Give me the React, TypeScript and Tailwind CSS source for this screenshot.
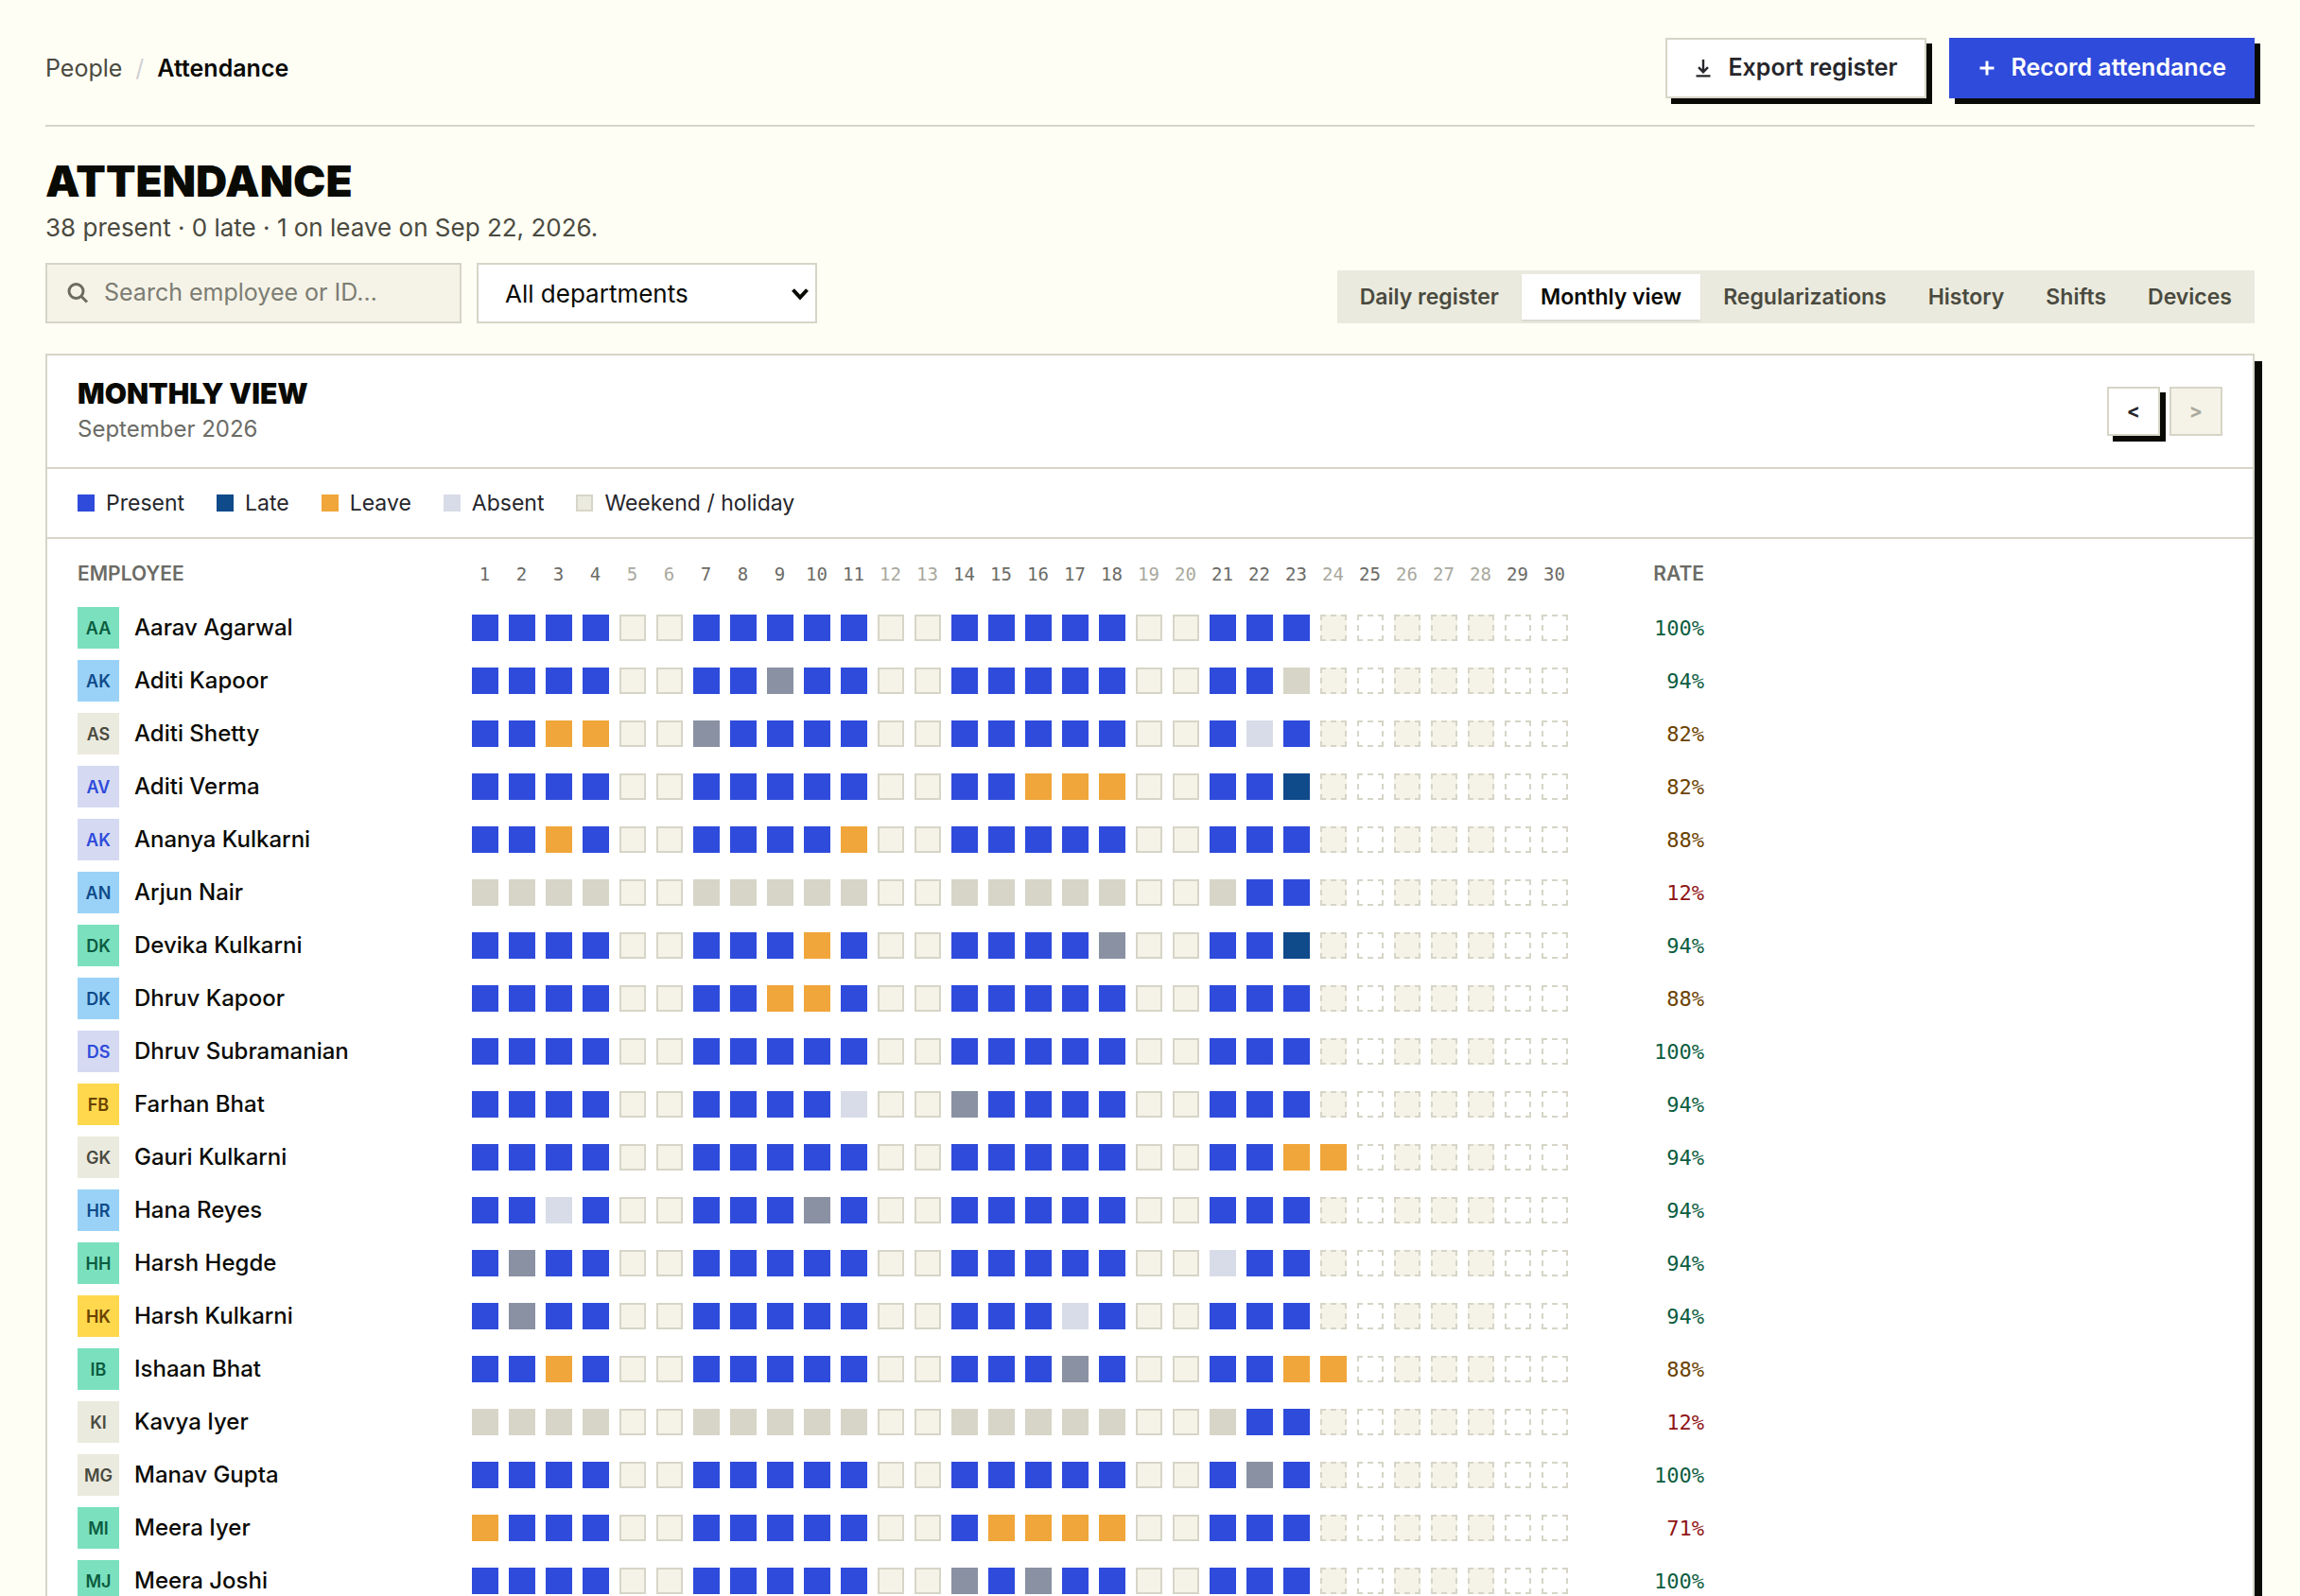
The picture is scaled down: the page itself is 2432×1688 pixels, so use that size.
import React from "react";
import clsx from "clsx";

type Status = "present" | "late" | "leave" | "absent" | "half" | "none";
type Tone = "green" | "blue" | "sand" | "lavender" | "yellow";

interface Employee {
  name: string;
  tone: Tone;
  rate: number;
  joined?: number;
  days?: Record<number, Status>;
}

const TODAY = 23;
const DAYS = Array.from({ length: 30 }, (_, i) => i + 1);
const OFF_DAYS = [5, 6, 12, 13, 19, 20, 24, 26, 27, 28];

const TABS = ["Daily register", "Monthly view", "Regularizations", "History", "Shifts", "Devices"];

const LEGEND = [
  { label: "Present", swatch: "bg-[#2f4bdb]" },
  { label: "Late", swatch: "bg-[#0f4a8a]" },
  { label: "Leave", swatch: "bg-[#f0a63a]" },
  { label: "Absent", swatch: "bg-[#d8dce8]" },
  { label: "Weekend / holiday", swatch: "bg-[#ebeade] border-2 border-[#d6d5c7]" },
];

const STATUS_STYLES: Record<Status, string> = {
  present: "bg-[#2f4bdb]",
  late: "bg-[#0f4a8a]",
  leave: "bg-[#f0a63a]",
  absent: "bg-[#d8dce8]",
  half: "bg-[#8a91a3]",
  none: "bg-[#d6d5c7]",
};

const TONE_STYLES: Record<Tone, string> = {
  green: "bg-[#7be0be] text-[#0b5c40]",
  blue: "bg-[#9ad2f7] text-[#0f4a8a]",
  sand: "bg-[#ebeade] text-[#4a4a40]",
  lavender: "bg-[#d5daf2] text-[#2f4bdb]",
  yellow: "bg-[#ffd84d] text-[#6b4200]",
};

const EMPLOYEES: Employee[] = [
  { name: "Aarav Agarwal", tone: "green", rate: 100 },
  { name: "Aditi Kapoor", tone: "blue", rate: 94, days: { 9: "half", 23: "none" } },
  { name: "Aditi Shetty", tone: "sand", rate: 82, days: { 3: "leave", 4: "leave", 7: "half", 22: "absent" } },
  { name: "Aditi Verma", tone: "lavender", rate: 82, days: { 16: "leave", 17: "leave", 18: "leave", 23: "late" } },
  { name: "Ananya Kulkarni", tone: "lavender", rate: 88, days: { 3: "leave", 11: "leave" } },
  { name: "Arjun Nair", tone: "blue", rate: 12, joined: 22 },
  { name: "Devika Kulkarni", tone: "green", rate: 94, days: { 10: "leave", 18: "half", 23: "late" } },
  { name: "Dhruv Kapoor", tone: "blue", rate: 88, days: { 9: "leave", 10: "leave" } },
  { name: "Dhruv Subramanian", tone: "lavender", rate: 100 },
  { name: "Farhan Bhat", tone: "yellow", rate: 94, days: { 11: "absent", 14: "half" } },
  { name: "Gauri Kulkarni", tone: "sand", rate: 94, days: { 23: "leave", 24: "leave" } },
  { name: "Hana Reyes", tone: "blue", rate: 94, days: { 3: "absent", 10: "half" } },
  { name: "Harsh Hegde", tone: "green", rate: 94, days: { 2: "half", 21: "absent" } },
  { name: "Harsh Kulkarni", tone: "yellow", rate: 94, days: { 2: "half", 17: "absent" } },
  { name: "Ishaan Bhat", tone: "green", rate: 88, days: { 3: "leave", 17: "half", 23: "leave", 24: "leave" } },
  { name: "Kavya Iyer", tone: "sand", rate: 12, joined: 22 },
  { name: "Manav Gupta", tone: "sand", rate: 100, days: { 22: "half" } },
  { name: "Meera Iyer", tone: "green", rate: 71, days: { 1: "leave", 15: "leave", 16: "leave", 17: "leave", 18: "leave" } },
  { name: "Meera Joshi", tone: "green", rate: 100, days: { 14: "half", 16: "half" } },
];

function cellStyle(employee: Employee, day: number) {
  const status = employee.days?.[day];
  if (status) return STATUS_STYLES[status];

  const off = OFF_DAYS.includes(day);
  if (day > TODAY) return clsx("border-2 border-dashed border-[#d6d5c7]", off && "bg-[#f5f3e7]");
  if (off) return "border-2 border-[#d6d5c7] bg-[#f5f3e7]";
  if (employee.joined && day < employee.joined) return STATUS_STYLES.none;
  return STATUS_STYLES.present;
}

function rateColor(rate: number) {
  if (rate >= 90) return "text-[#0b5c40]";
  if (rate >= 80) return "text-[#6b4200]";
  return "text-[#8f1414]";
}

function initials(name: string) {
  return name.split(" ").map((part) => part[0]).join("");
}

function Header() {
  return (
    <header className="flex items-center justify-between border-b-2 border-[#d6d5c7] pt-10 pb-7">
      <nav className="flex items-center gap-[14px] text-[25px] leading-8">
        <a href="#people" className="text-[#4a4a40]">People</a>
        <span className="text-[#cfcfd2]">/</span>
        <span className="font-semibold text-[#0a0a05]">Attendance</span>
      </nav>
      <div className="flex gap-6">
        <button className="flex h-16 items-center gap-4 border-2 border-[#d6d5c7] bg-white px-7 text-[25px] font-semibold text-[#26262b] shadow-[6px_6px_0_#0a0a05]">
          <svg className="size-5" viewBox="0 0 20 20" fill="none" stroke="currentColor" strokeWidth="2.4">
            <path d="M10 1v13M5 9.2l5 5 5-5M2.5 18.4h15" />
          </svg>
          Export register
        </button>
        <button className="flex h-16 items-center gap-4 bg-[#2f4bdb] px-[30px] text-[25px] font-semibold text-white shadow-[6px_6px_0_#0a0a05]">
          <svg className="size-5" viewBox="0 0 20 20" fill="none" stroke="currentColor" strokeWidth="3">
            <path d="M10 2.5v15M2.5 10h15" />
          </svg>
          Record attendance
        </button>
      </div>
    </header>
  );
}

function Toolbar() {
  return (
    <div className="mt-[21px] flex items-end justify-between">
      <div className="flex gap-4">
        <label className="flex h-16 w-[440px] items-center gap-4 border-2 border-[#d6d5c7] bg-[#f5f3e7] px-5">
          <svg className="size-6 shrink-0" viewBox="0 0 24 24" fill="none" stroke="#6b6b60" strokeWidth="3">
            <circle cx="10.5" cy="10" r="7.5" />
            <path d="M16 15.5l6 6" />
          </svg>
          <input
            type="search"
            aria-label="Search employees"
            placeholder="Search employee or ID…"
            className="min-w-0 flex-1 bg-transparent text-[25px] outline-none placeholder:text-[#7c7c73]"
          />
        </label>
        <div className="relative">
          <select
            aria-label="Department"
            className="h-16 w-[360px] appearance-none border-2 border-[#d6d5c7] bg-white px-7 text-[26px] text-[#0a0a05]"
          >
            <option>All departments</option>
          </select>
          <svg className="pointer-events-none absolute top-[26px] right-2 h-[14px] w-5" viewBox="0 0 20 14" fill="none" stroke="#0a0a05" strokeWidth="4">
            <path d="M2.5 2.5l7.5 8 7.5-8" />
          </svg>
        </div>
      </div>
      <div role="tablist" className="flex gap-1 bg-[#ebeade] p-1">
        {TABS.map((tab) => {
          const active = tab === "Monthly view";
          return (
            <button
              key={tab}
              role="tab"
              aria-selected={active}
              className={clsx(
                "h-12 px-5 text-[23px] font-semibold",
                active ? "bg-white text-[#0a0a05] shadow-[0_2px_2px_rgba(10,10,5,0.08)]" : "text-[#4a4a40]"
              )}
            >
              {tab}
            </button>
          );
        })}
      </div>
    </div>
  );
}

function RegisterTable() {
  return (
    <table className="mx-8 table-fixed border-collapse">
      <thead>
        <tr className="h-[66px] text-[21px] text-[#6b6b66]">
          <th className="w-[412px] p-0 pt-2 text-left font-semibold">EMPLOYEE</th>
          {DAYS.map((day) => (
            <th
              key={day}
              className={clsx(
                "w-[39px] p-0 pt-2 pr-[2px] font-['DejaVu_Sans_Mono',monospace] text-[19px] font-normal",
                OFF_DAYS.includes(day) && "text-[#a9a99e]"
              )}
            >
              {day}
            </th>
          ))}
          <th className="w-[138px] p-0 pt-2 text-right font-semibold">RATE</th>
        </tr>
      </thead>
      <tbody>
        {EMPLOYEES.map((employee) => (
          <tr key={employee.name} className="h-14">
            <td className="p-0">
              <div className="flex items-center gap-4">
                <span className={clsx("flex size-11 items-center justify-center text-[18px] font-semibold", TONE_STYLES[employee.tone])}>
                  {initials(employee.name)}
                </span>
                <span className="text-[24px] font-medium text-[#0a0a05]">{employee.name}</span>
              </div>
            </td>
            {DAYS.map((day) => (
              <td key={day} className="p-0 pl-[5px]">
                <div className={clsx("size-7", cellStyle(employee, day))} />
              </td>
            ))}
            <td className={clsx("p-0 text-right font-['DejaVu_Sans_Mono',monospace] text-[22px]", rateColor(employee.rate))}>
              {employee.rate}%
            </td>
          </tr>
        ))}
      </tbody>
    </table>
  );
}

export default function App() {
  return (
    <div className="h-screen overflow-hidden bg-[#fffef5] px-12 font-[Inter,sans-serif] text-[#0a0a05]">
      <Header />

      <main>
        <h1 className="mt-[33px] text-[46px] leading-[48px] font-black">ATTENDANCE</h1>
        <p className="mt-[10px] text-[26px] leading-8 text-[#4a4a40]">38 present · 0 late · 1 on leave on Sep 22, 2026.</p>

        <Toolbar />

        <section className="mt-8 border-2 border-[#d6d5c7] bg-white shadow-[8px_8px_0_#0a0a05]">
          <div className="flex items-center justify-between border-b-2 border-[#d6d5c7] px-8 py-6">
            <div>
              <h2 className="text-[30px] leading-8 font-black">MONTHLY VIEW</h2>
              <p className="mt-[6px] text-[24px] leading-8 text-[#6b6b66]">September 2026</p>
            </div>
            <div className="flex gap-[10px] text-[21px] font-bold">
              <button aria-label="Previous month" className="h-[52px] w-14 border-2 border-[#d6d5c7] bg-white text-[#26262b] shadow-[6px_6px_0_#0a0a05]">
                &lt;
              </button>
              <button aria-label="Next month" disabled className="h-[52px] w-14 border-2 border-[#d6d5c7] bg-[#f5f3e7] text-[#a9a99e]">
                &gt;
              </button>
            </div>
          </div>

          {/* Legend */}
          <ul className="flex h-[74px] items-center gap-[34px] border-b-2 border-[#d6d5c7] px-8 text-[23px] text-[#26262b]">
            {LEGEND.map((item) => (
              <li key={item.label} className="flex items-center gap-3">
                <span className={clsx("size-[18px]", item.swatch)} />
                {item.label}
              </li>
            ))}
          </ul>

          <RegisterTable />
        </section>
      </main>
    </div>
  );
}
